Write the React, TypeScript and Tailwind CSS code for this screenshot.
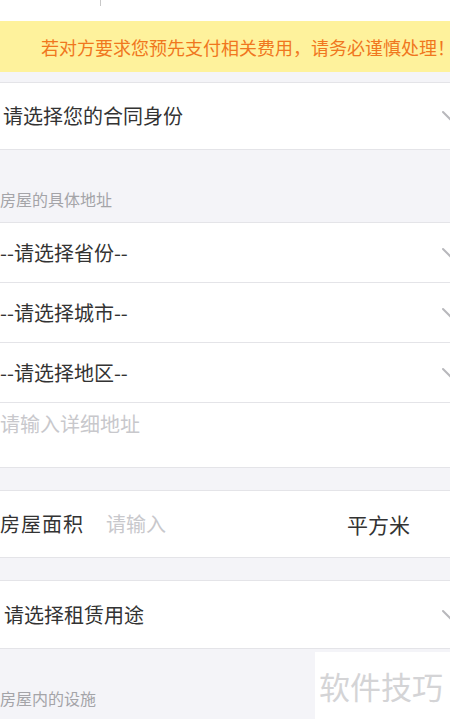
import React from "react"

const font = { fontFamily: '"Noto Sans CJK SC", "Noto Sans", sans-serif' }

const Chevron = () => (
	<svg width="18" height="12" viewBox="0 0 18 12" className="shrink-0 mr-[-10px]" fill="none">
		<path d="M1 2 L9 10 L17 2" stroke="#b8b8bc" strokeWidth="2" strokeLinecap="round" strokeLinejoin="round" />
	</svg>
)

const SelectRow = ({ label, height, pl = "pl-0" }: { label: string; height: string; pl?: string }) => (
	<div className={`flex items-center justify-between bg-white border-b border-[#e4e4e8] ${height} ${pl}`}>
		<span className="text-[20px] text-[#333333] leading-none">{label}</span>
		<Chevron />
	</div>
)

export default function App() {
	return (
		<div className="w-[450px] h-[719px] overflow-hidden bg-[#f4f4f8] relative" style={font}>
			{/* top bar */}
			<div className="h-[21px] bg-white relative">
				<div className="absolute left-[100px] top-0 w-px h-[6px] bg-[#c8c8c8]" />
			</div>

			{/* warning banner */}
			<div className="h-[51px] bg-[#fef29c] flex items-center pl-[41px]">
				<span className="text-[18px] text-[#f0771e] whitespace-nowrap leading-none">
					若对方要求您预先支付相关费用，请务必谨慎处理！
				</span>
			</div>

			<div className="h-[10px]" />

			{/* contract identity */}
			<div className="border-t border-[#e4e4e8]">
				<SelectRow label="请选择您的合同身份" height="h-[67px]" pl="pl-[3px]" />
			</div>

			{/* address label */}
			<div className="h-[73px] flex items-end pb-[15px] border-b border-[#e4e4e8]">
				<span className="text-[16px] text-[#a4a4a8] leading-none">房屋的具体地址</span>
			</div>

			<SelectRow label="--请选择省份--" height="h-[60px]" />
			<SelectRow label="--请选择城市--" height="h-[60px]" />
			<SelectRow label="--请选择地区--" height="h-[60px]" />

			{/* detail address */}
			<div className="h-[65px] bg-white border-b border-[#e4e4e8] pt-[10px]">
				<span className="text-[20px] text-[#c8c8cc] leading-none">请输入详细地址</span>
			</div>

			<div className="h-[22px]" />

			{/* area */}
			<div className="h-[68px] bg-white border-y border-[#e4e4e8] flex items-center">
				<span className="text-[20px] text-[#333333] leading-none tracking-[1px]">房屋面积</span>
				<span className="text-[20px] text-[#c8c8cc] leading-none ml-[22px]">请输入</span>
				<span className="text-[21px] text-[#333333] leading-none ml-auto mr-[40px]">平方米</span>
			</div>

			<div className="h-[22px]" />

			{/* usage */}
			<div className="border-t border-[#e4e4e8]">
				<SelectRow label="请选择租赁用途" height="h-[68px]" pl="pl-[4px]" />
			</div>

			{/* facilities label */}
			<div className="h-[72px] flex items-end pb-[15px]">
				<span className="text-[16px] text-[#a4a4a8] leading-none">房屋内的设施</span>
			</div>

			{/* watermark */}
			<div className="absolute left-[315px] top-[652px] w-[135px] h-[67px] bg-white flex items-center pl-[4px]">
				<span className="text-[31px] text-[#d4d4d6] leading-none whitespace-nowrap">软件技巧</span>
			</div>
		</div>
	)
}
